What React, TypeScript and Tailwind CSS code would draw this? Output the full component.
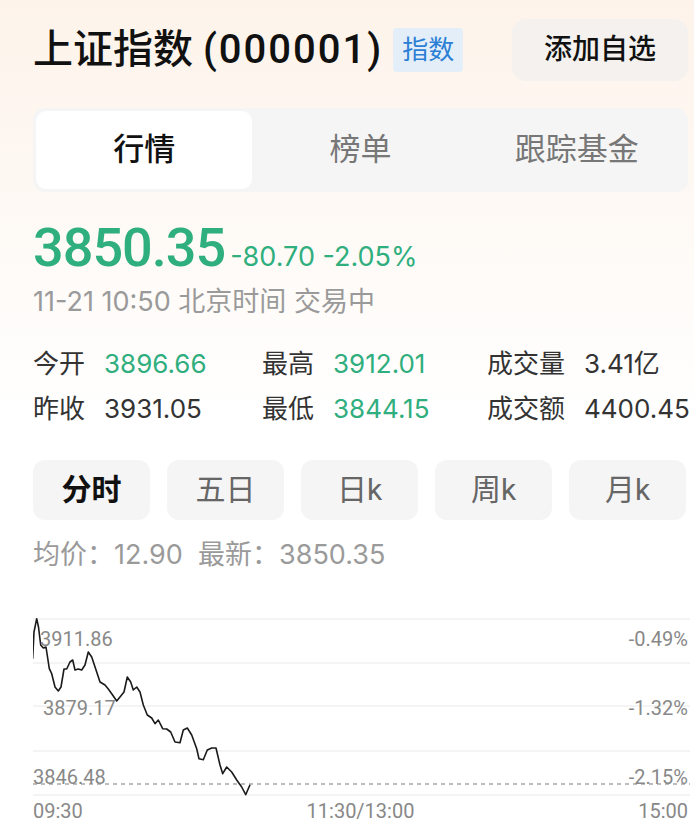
import React from 'react';

const FONT = { fontFamily: 'Roboto, "Noto Sans CJK SC", sans-serif' };
const INTER = { fontFamily: 'Inter, "Noto Sans CJK SC", sans-serif' };

// intraday line, points picked off the screen (page coords, shifted into the 657x200 chart box)
const RAW: [number, number][] = [
  [32.7, 656.7], [34, 630], [36.7, 616.7], [38.5, 625], [40.7, 643], [43.3, 646], [46, 645],
  [49.3, 666.7], [51.7, 671.7], [55, 685], [58.3, 689], [61, 685], [64, 667], [66.7, 667],
  [70, 660], [72.7, 658], [75, 668], [78.3, 667], [81.7, 668], [85, 663], [88.3, 650],
  [91.7, 655], [96.7, 670], [100, 680], [105, 683], [108.3, 687], [111.7, 691.7], [116.7, 699],
  [120, 695], [124, 690], [127.3, 675], [130.7, 680], [133.3, 688], [136.7, 685], [140, 690],
  [143.3, 703], [147.3, 713], [151.7, 716], [155, 721.7], [158.3, 718], [162.7, 726.7],
  [166.7, 727], [170.7, 730], [175, 740], [180, 740.7], [183.3, 728], [187.3, 726],
  [191.7, 733], [196.7, 746.7], [199, 756.7], [203.3, 757.7], [207.3, 748], [211.7, 746],
  [216, 746], [220, 763], [222.7, 771.7], [226.7, 765], [231.7, 770], [236.7, 778],
  [241.7, 785], [245.7, 792.7], [250, 782.7],
];
const LINE = RAW.map(([x, y]) => `${(x - 33).toFixed(1)},${(y - 600).toFixed(1)}`).join(' ');

const tabs = ['行情', '榜单', '跟踪基金'];
const periods = ['分时', '五日', '日k', '周k', '月k'];

function Stat({ label, value, green }: { label: string; value: string; green?: boolean }) {
  return (
    <div className="flex items-center gap-[19px] whitespace-nowrap">
      <span className="text-[#333]">{label}</span>
      <span className={green ? 'text-[#2fae7e]' : 'text-[#333]'}>{value}</span>
    </div>
  );
}

export default function App() {
  return (
    <div
      className="w-[694px] h-[836px] overflow-hidden bg-gradient-to-b from-[#fdf3ea] via-white to-white pl-[33px] pr-[6px]"
      style={FONT}
    >
      {/* header */}
      <div className="pt-[19px] flex items-center justify-between">
        <div className="flex items-center gap-[10px]">
          <h1 className="text-[40px] leading-none font-medium text-[#111] whitespace-nowrap">
            上证指数 <span className="tracking-[2px]">(000001)</span>
          </h1>
          <span className="bg-[#e3eef9] text-[#2b7fd5] text-[26px] leading-none px-[9px] py-[9px] rounded-[4px]">指数</span>
        </div>
        <button className="h-[62px] w-[176px] rounded-[14px] bg-[#f4f1ee] text-[28px] font-medium text-[#111]">
          添加自选
        </button>
      </div>

      {/* tabs */}
      <div className="mt-[27px] h-[84px] rounded-[12px] bg-[#f5f5f5] p-[3px] grid grid-cols-3">
        {tabs.map((t, i) => (
          <div
            key={t}
            className={
              'flex items-center justify-center rounded-[10px] text-[31px] ' +
              (i === 0 ? 'bg-white text-[#111] font-medium' : 'text-[#777]')
            }
          >
            {t}
          </div>
        ))}
      </div>

      {/* price */}
      <div className="mt-[27px] flex items-baseline gap-[5px] text-[#2fae7e]">
        <span className="text-[54px] leading-[58px] font-medium tracking-[-1px]">3850.35</span>
        <span className="text-[27px] whitespace-nowrap" style={INTER}>-80.70 -2.05%</span>
      </div>
      <div className="mt-[6px] text-[27px] text-[#9a9a9a] leading-[36px] whitespace-nowrap" style={INTER}>
        11-21 10:50 北京时间 交易中
      </div>

      {/* stats */}
      <div
        className="mt-[26px] grid grid-cols-[229px_225px_1fr] gap-y-[10px] text-[26px] leading-[35px]"
        style={INTER}
      >
        <Stat label="今开" value="3896.66" green />
        <Stat label="最高" value="3912.01" green />
        <Stat label="成交量" value="3.41亿" />
        <Stat label="昨收" value="3931.05" />
        <Stat label="最低" value="3844.15" green />
        <Stat label="成交额" value="4400.45" />
      </div>

      {/* period switch */}
      <div className="mt-[34px] flex gap-[17px]">
        {periods.map((p, i) => (
          <div
            key={p}
            className={
              'shrink-0 w-[117px] h-[60px] rounded-[12px] bg-[#f5f5f5] flex items-center justify-center text-[30px] ' +
              (i === 0 ? 'text-[#111] font-semibold' : 'text-[#666]')
            }
          >
            {p}
          </div>
        ))}
      </div>

      <div className="mt-[18px] text-[27px] leading-[34px] text-[#9a9a9a] whitespace-nowrap" style={INTER}>
        均价：12.90&nbsp;&nbsp;最新：3850.35
      </div>

      {/* chart */}
      <div className="relative mt-[30px] w-[657px] h-[200px]">
        <svg width="657" height="200" viewBox="0 0 657 200" className="absolute inset-0">
          {[17, 61, 104, 149, 193].map(y => (
            <line key={y} x1="0" x2="657" y1={y} y2={y} stroke="#f1f1f1" strokeWidth="1.5" />
          ))}
          <line x1="0" x2="657" y1="182" y2="182" stroke="#a8a8a8" strokeWidth="1.5" strokeDasharray="4 4" />
          <polyline points={LINE} fill="none" stroke="#1a1a1a" strokeWidth="1.6" strokeLinejoin="round" />
        </svg>
        <span className="absolute left-[7px] top-[27px] text-[20px] leading-none text-[#888]">3911.86</span>
        <span className="absolute left-[10px] top-[96px] text-[20px] leading-none text-[#888]">3879.17</span>
        <span className="absolute left-0 top-[165px] text-[20px] leading-none text-[#888]">3846.48</span>
        <span className="absolute right-[2px] top-[27px] text-[20px] leading-none text-[#888]">-0.49%</span>
        <span className="absolute right-[2px] top-[96px] text-[20px] leading-none text-[#888]">-1.32%</span>
        <span className="absolute right-[2px] top-[165px] text-[20px] leading-none text-[#888]">-2.15%</span>
      </div>
      <div className="flex justify-between w-[655px] text-[20px] leading-none text-[#888] -mt-[1px]">
        <span>09:30</span>
        <span>11:30/13:00</span>
        <span>15:00</span>
      </div>
    </div>
  );
}
